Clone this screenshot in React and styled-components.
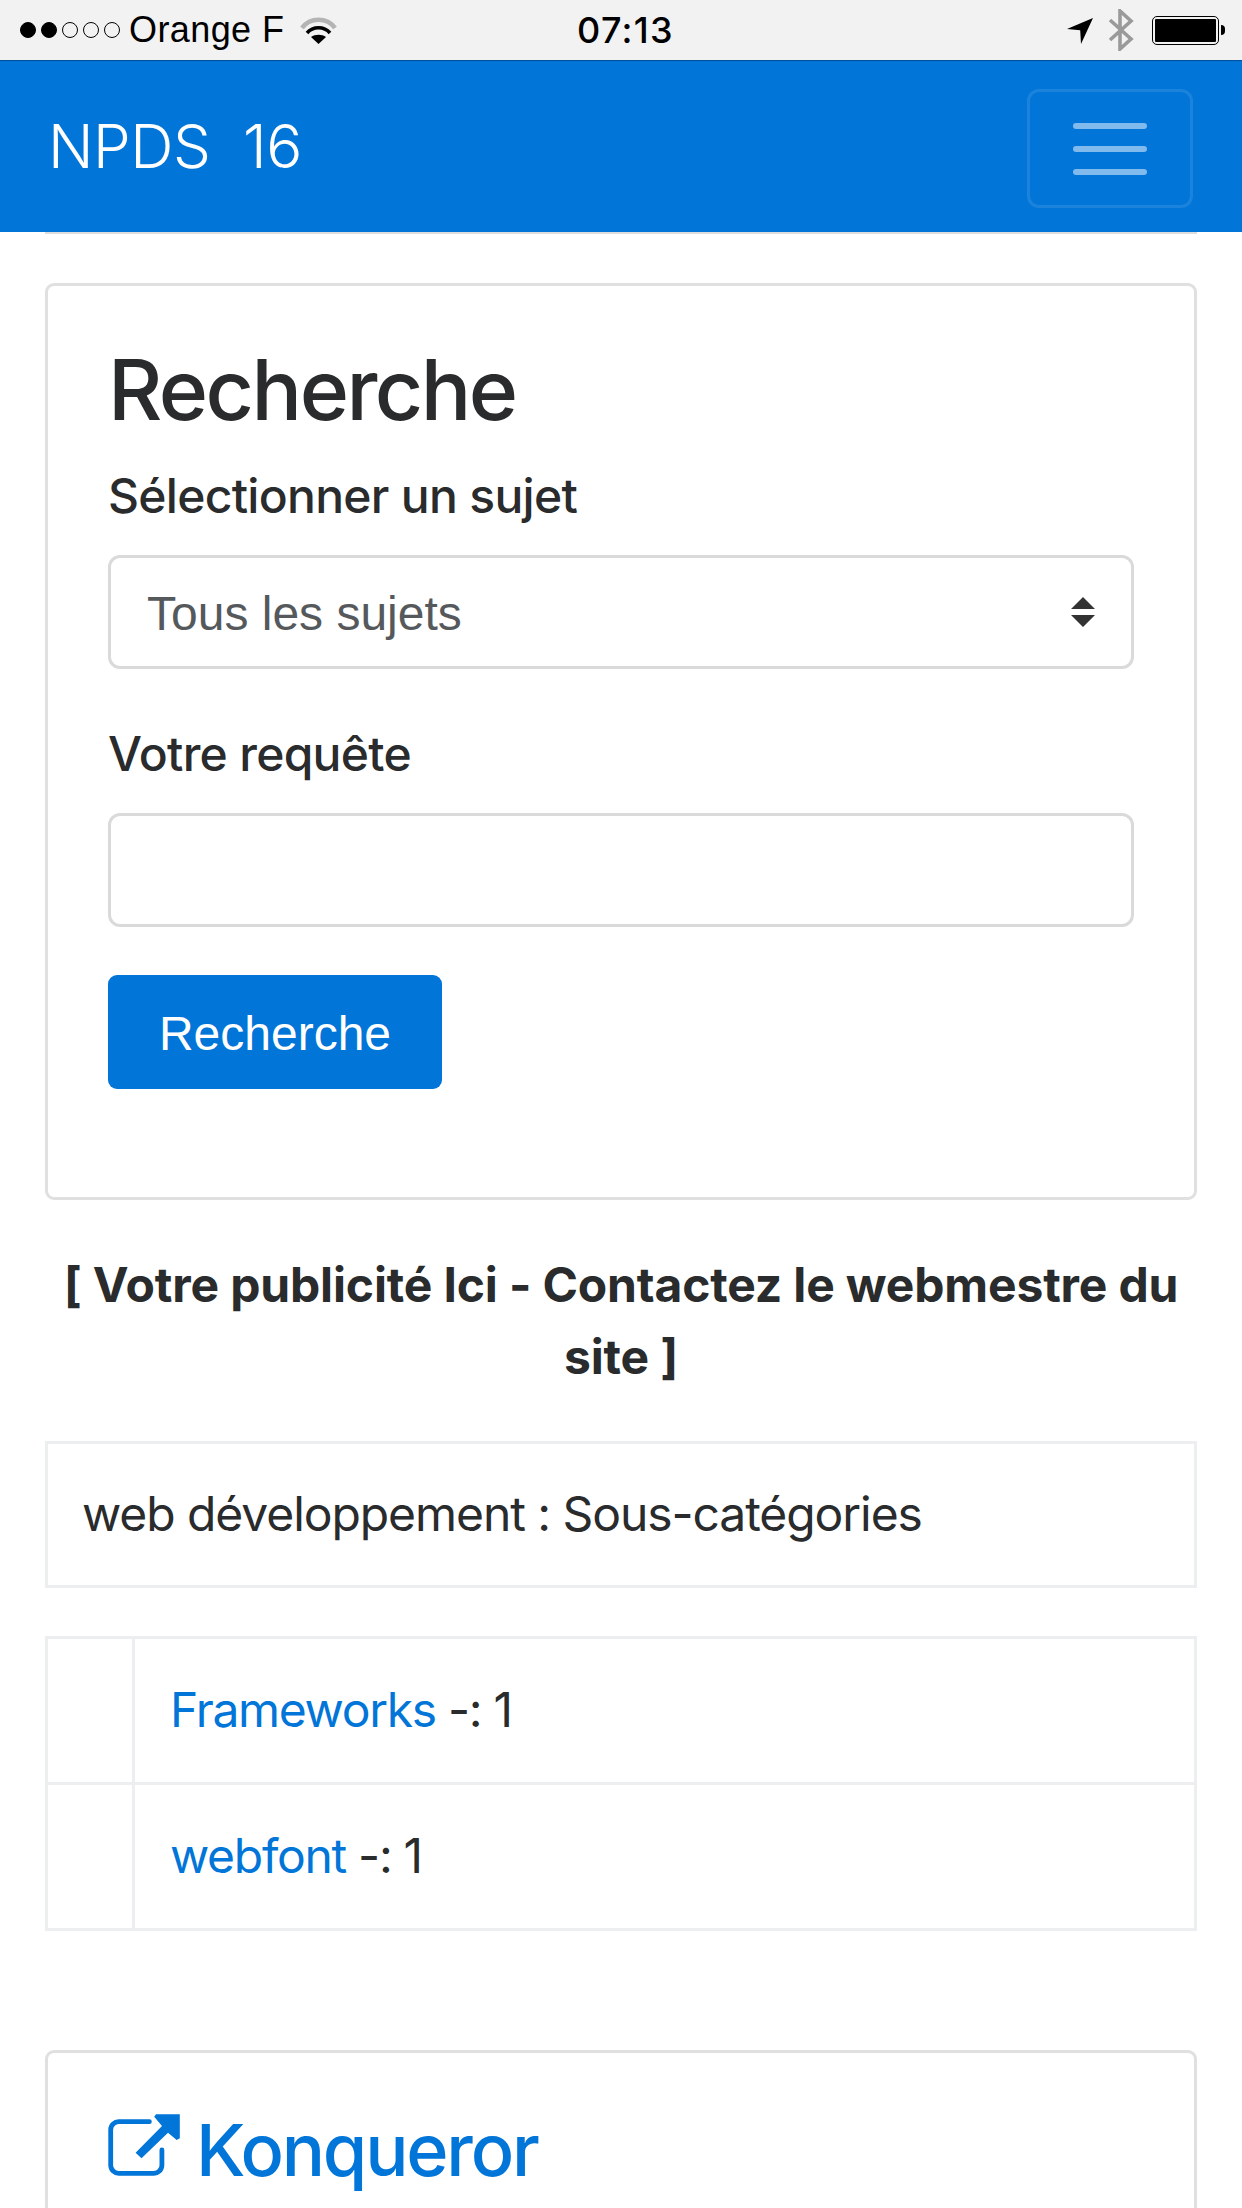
import React from "react";
import styled, { createGlobalStyle } from "styled-components";

const Global = createGlobalStyle`
  html, body { margin: 0; padding: 0; background: #fff; }
  body { height: 2208px; overflow: hidden; font-family: Inter, "Liberation Sans", sans-serif; font-size: 48px; line-height: 72px; color: #292b2c; }
  * { box-sizing: border-box; }
`;

const StatusBar = styled.div`
  height: 60px; background: #f2f2f2; display: grid; grid-template-columns: 1fr auto 1fr; align-items: center;
  padding: 0 17px 0 20px; color: #000; font-family: "Liberation Sans", sans-serif;
`;
const StatusLeft = styled.div`display: flex; align-items: center; height: 60px;`;
const StatusRight = styled.div`display: flex; align-items: center; justify-content: flex-end; height: 60px;`;
const Dot = styled.span`
  width: 16px; height: 16px; border-radius: 50%; margin-right: 5px; border: 1px solid #000; flex: none;
  background: ${(p) => (p.$on ? "#000" : "transparent")};
`;
const Carrier = styled.span`font-size: 36px; line-height: 60px; margin-left: 4px; letter-spacing: .4px;`;
const Time = styled.span`font-size: 36px; line-height: 60px; font-weight: 500; font-family: Inter, sans-serif; margin-left: 6px; letter-spacing: 1.3px;`;
const WifiIcon = styled.svg`width: 37px; height: 28px; margin-left: 16px; flex: none;`;
const ArrowIcon = styled.svg`width: 28px; height: 28px; margin-right: 14px;`;
const BtIcon = styled.svg`width: 26px; height: 42px; margin-right: 18px;`;
const Battery = styled.span`
  position: relative; display: block; width: 67px; height: 29px; border: 1.5px solid #000; border-radius: 5px; padding: 2px; margin-right: 6px;
  &::before { content: ""; display: block; width: 100%; height: 100%; background: #000; border-radius: 1px; }
  &::after { content: ""; position: absolute; right: -7px; top: 8px; width: 4px; height: 10px; background: #000; border-radius: 0 5px 5px 0; }
`;

const Navbar = styled.nav`
  height: 172px; background: #0275d8; box-shadow: inset 0 2px 1px -1px rgba(0,40,90,.5); display: flex; align-items: center; justify-content: space-between;
  padding: 0 49px 0 48px;
`;
const Brand = styled.a`color: #fff; font-size: 60px; font-weight: 300; font-family: Inter, sans-serif; white-space: pre; letter-spacing: -.5px;`;
const Toggler = styled.button`
  width: 166px; height: 119px; border: 3px solid rgba(255,255,255,.1); border-radius: 12px; background: transparent; margin-top: 5px;
  display: flex; flex-direction: column; align-items: center; justify-content: center; gap: 17px; padding: 0;
`;
const TogglerBar = styled.span`display: block; width: 74px; height: 6px; border-radius: 3px; background: rgba(255,255,255,.5);`;
const NavRule = styled.div`height: 2px; margin: 0 45px; background: #ddd;`;

const Page = styled.main`padding: 49px 45px 0;`;
const Card = styled.section`
  border: 3px solid #e0e0e0; border-radius: 9px; padding: 60px 60px 0;
  height: ${(p) => p.$h}px;
`;
const Title = styled.h3`font-size: 84px; line-height: 92px; font-weight: 500; margin: -2px 0 24px; letter-spacing: -2.5px;`;
const Label = styled.label`display: block; font-size: 48px; line-height: 72px; font-weight: 500; margin-bottom: 23px; letter-spacing: -.7px;`;
const Field = styled.div`
  position: relative; height: 114px; border: 3px solid #dadada; border-radius: 12px; background: #fff; margin-bottom: ${(p) => p.$mb}px;
  padding: 0 36px; display: flex; align-items: center; justify-content: space-between;
  font-family: "Liberation Sans", sans-serif; color: #55595c; font-size: 48px;
`;
const FieldText = styled.span`padding-top: 3px;`;
const SelectArrows = styled.svg`width: 24px; height: 30px;`;
const Button = styled.button`
  width: 334px; height: 114px; border: 0; border-radius: 9px; background: #0275d8; color: #fff; padding: 2px 0 0;
  font-family: "Liberation Sans", sans-serif; font-size: 48px; display: block;
`;
const Ad = styled.p`margin: 49px 0 48px; text-align: center; font-weight: 700; letter-spacing: -.15px;`;
const Heading = styled.div`border: 3px solid #eceeef; padding: 34px 34px; height: 147px; margin-bottom: 48px; letter-spacing: -1.07px;`;
const Table = styled.table`width: 100%; border-collapse: collapse; margin-bottom: 119px; letter-spacing: -1.3px;`;
const Cell = styled.td`border: 3px solid #eceeef; height: 146px; padding: 0 35px 2px; width: ${(p) => p.$w || "auto"};`;
const Link = styled.a`color: #0275d8;`;
const CardTitle = styled.h4`
  display: flex; align-items: center; gap: 15px; margin: -3px 0 0; font-size: 72px; line-height: 80px; font-weight: 500; color: #0275d8; letter-spacing: -2.2px;
`;
const ExtIcon = styled.svg`width: 74px; height: 64px; margin: 0 0 12px -1px; flex: none;`;

export default function App() {
  return (
    <>
      <Global />
      <StatusBar>
        <StatusLeft>
          <Dot $on /><Dot $on /><Dot /><Dot /><Dot />
          <Carrier>Orange F</Carrier>
          <WifiIcon viewBox="0 0 37 28">
            <path d="M2 12 C10 1 27 1 35 12" fill="none" stroke="#b4b4b4" strokeWidth="4.5" />
            <path d="M7 17 C13 10 24 10 30 17" fill="none" stroke="#000" strokeWidth="3.5" />
            <path d="M11 21 C15 18 22 18 26 21 L18.5 28Z" fill="#000" />
          </WifiIcon>
        </StatusLeft>
        <Time>07:13</Time>
        <StatusRight>
          <ArrowIcon viewBox="0 0 28 28"><path d="M1 13 L27 2 L15 28 L14.2 14.2Z" fill="#000" /></ArrowIcon>
          <BtIcon viewBox="0 0 26 42"><path d="M2 11 L23 30 L12 40 V2 L23 12 L2 31" fill="none" stroke="#9a9a9a" strokeWidth="3.6" /></BtIcon>
          <Battery />
        </StatusRight>
      </StatusBar>
      <Navbar>
        <Brand>NPDS  16</Brand>
        <Toggler aria-label="Menu"><TogglerBar /><TogglerBar /><TogglerBar /></Toggler>
      </Navbar>
      <NavRule />
      <Page>
        <Card $h={917}>
          <Title>Recherche</Title>
          <Label>Sélectionner un sujet</Label>
          <Field $mb={49}>
            <FieldText>Tous les sujets</FieldText>
            <SelectArrows viewBox="0 0 24 30"><path d="M12 0 L24 12 H0Z M0 18 H24 L12 30Z" fill="#333" /></SelectArrows>
          </Field>
          <Label>Votre requête</Label>
          <Field $mb={48} />
          <Button>Recherche</Button>
        </Card>
        <Ad>[ Votre publicité Ici - Contactez le webmestre du site ]</Ad>
        <Heading>web développement : Sous-catégories</Heading>
        <Table>
          <tbody>
            <tr><Cell $w="87px" /><Cell><Link>Frameworks</Link> -: 1</Cell></tr>
            <tr><Cell $w="87px" /><Cell><Link>webfont</Link> -: 1</Cell></tr>
          </tbody>
        </Table>
        <Card $h={400}>
          <CardTitle>
            <ExtIcon viewBox="0 0 74 64">
              <path d="M42.4 9.7 H12 a8 8 0 0 0 -8.3 8 V53.3 a8 8 0 0 0 8.3 8 H46.6 a8 8 0 0 0 8.3 -8 V38" fill="none" stroke="#0275d8" strokeWidth="4.8" strokeLinecap="round" />
              <path d="M47.2 4.7 L49 2.3 H72.8 V26.3 L69.7 28 L61 20.7 L34.5 46.3 L28.6 40.7 L55 14Z" fill="#0275d8" />
            </ExtIcon>
            Konqueror
          </CardTitle>
        </Card>
      </Page>
    </>
  );
}
